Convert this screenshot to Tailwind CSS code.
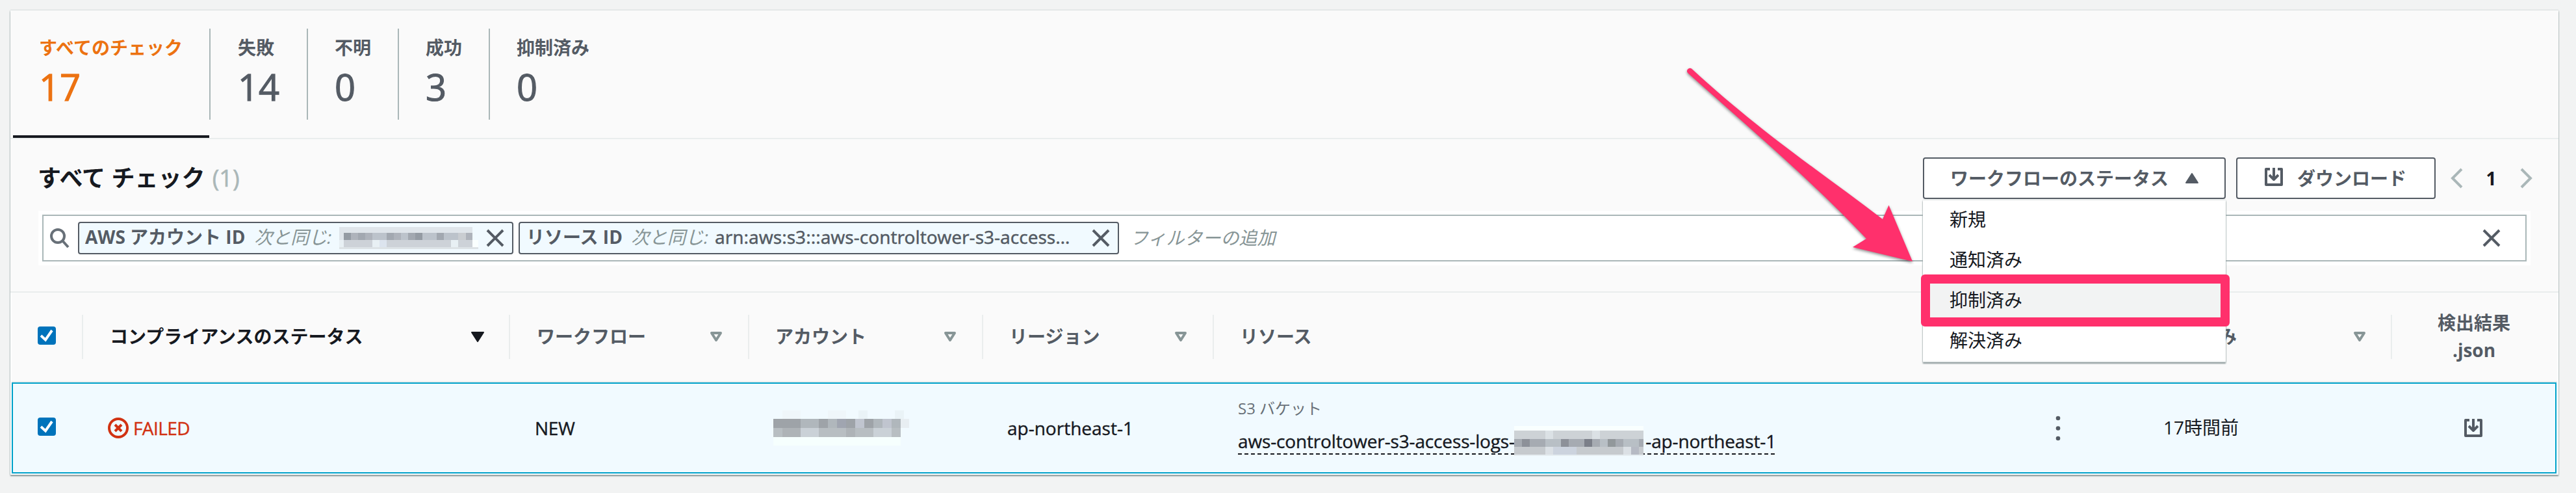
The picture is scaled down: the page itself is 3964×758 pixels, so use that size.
<!DOCTYPE html>
<html lang="ja">
<head>
<meta charset="utf-8">
<title>Security checks</title>
<script src="https://cdn.jsdelivr.net/npm/@tailwindcss/browser@4"></script>
</head>
<body class="w-[3964px] h-[758px] overflow-hidden bg-[#f2f3f3] pt-4 pl-4 text-[28px] leading-[44px] text-[#16191f] font-['Open_Sans','Noto_Sans_CJK_JP',sans-serif]">
<main class="relative w-[3921px] h-[714px] bg-white shadow-[0_2px_2px_0_#879596,0_0_2px_0_#aab7b8]">

  <nav class="flex h-[198px] bg-[#fafafa] border-b-2 border-[#eaeded] pl-1 text-[#545b64] whitespace-nowrap">
    <div class="w-[302px] h-[196px] border-b-4 border-[#16191f] flex pt-7">
      <div class="w-[302px] h-[140px] pl-10 pt-[7px] text-[#ec7211] shrink-0">
        <div class="font-bold">すべてのチェック</div><div class="text-[56px] leading-[76px] [-webkit-text-stroke:1.2px]">17</div>
      </div>
    </div>
    <div class="mt-7 w-[150px] h-[140px] border-l-2 border-[#aab7b8] pl-[42px] pt-[7px]"><div class="font-bold">失敗</div><div class="text-[56px] leading-[76px] [-webkit-text-stroke:1.2px]">14</div></div>
    <div class="mt-7 w-[140px] h-[140px] border-l-2 border-[#aab7b8] pl-[41px] pt-[7px]"><div class="font-bold">不明</div><div class="text-[56px] leading-[76px] [-webkit-text-stroke:1.2px]">0</div></div>
    <div class="mt-7 w-[140px] h-[140px] border-l-2 border-[#aab7b8] pl-[41px] pt-[7px]"><div class="font-bold">成功</div><div class="text-[56px] leading-[76px] [-webkit-text-stroke:1.2px]">3</div></div>
    <div class="mt-7 w-[200px] h-[140px] border-l-2 border-[#aab7b8] pl-[41px] pt-[7px]"><div class="font-bold">抑制済み</div><div class="text-[56px] leading-[76px] [-webkit-text-stroke:1.2px]">0</div></div>
  </nav>

  <section class="h-[236px] bg-[#fafafa] border-b-2 border-[#eaeded] pt-7 whitespace-nowrap">
    <div class="flex h-16 items-center pl-[42px]">
      <h1 class="text-[36px] font-bold w-[2901px]">すべて チェック <span class="ml-[2px] font-normal text-[#aab7b8] [-webkit-text-stroke:0.6px]">(1)</span></h1>
      <div class="relative w-[466px] h-16 shrink-0 border-2 border-[#545b64] rounded bg-white flex items-center pl-10 text-[#545b64] font-bold">
        ワークフローのステータス
        <svg class="ml-[26px]" width="20" height="16" viewBox="0 0 20 16"><path d="M10 1L19 15H1Z" fill="#545b64" stroke="#545b64" stroke-width="2" stroke-linejoin="round"/></svg>
        <ul class="absolute left-[-2px] top-[64px] z-10 w-[466px] h-[249px] bg-white font-normal text-[#16191f] leading-[58px] border-b-2 border-[#eaeded] shadow-[0_2px_2px_0_#879596,0_0_2px_0_#aab7b8]">
          <li class="h-[62px] pl-[41px]">新規</li>
          <li class="h-[62px] pl-[41px]">通知済み</li>
          <li class="h-[62px] pl-[41px] bg-[#f2f3f3]">抑制済み</li>
          <li class="h-[62px] pl-[41px]">解決済み</li>
        </ul>
      </div>
      <div class="ml-4 w-[307px] h-16 shrink-0 border-2 border-[#545b64] rounded bg-white flex items-center pl-[42px] text-[#545b64] font-bold">
        <svg class="mr-[22px] -mt-1" width="28" height="28" viewBox="0 0 28 28"><path d="M8 2H2V26H26V2H20M14 0V17M7 11L14 18L21 11" fill="none" stroke="#545b64" stroke-width="4" stroke-linejoin="round"/></svg>
        ダウンロード
      </div>
      <svg class="ml-[23px] shrink-0" width="19" height="32" viewBox="0 0 19 32" fill="none" stroke="#aab7b8" stroke-width="4"><path d="M17 2L3 16L17 30"/></svg>
      <span class="w-[87px] text-center font-bold">1</span>
      <svg class="shrink-0" width="20" height="32" viewBox="0 0 20 32" fill="none" stroke="#aab7b8" stroke-width="4"><path d="M3 2L17 16L3 30"/></svg>
    </div>
    <div class="mt-[18px] ml-[43px] w-[3835px] h-[84px] bg-white p-[6px]">
      <div class="w-[3823px] h-[72px] border-2 border-[#aab7b8] flex items-center text-[#545b64]">
        <svg class="ml-[10px]" width="30" height="32" viewBox="0 0 30 32" fill="none" stroke="#687078" stroke-width="4"><circle cx="12" cy="13" r="10"/><path d="M19 20L28 30"/></svg>
        <div class="ml-[13px] w-[670px] h-[50px] border-2 border-[#545b64] rounded bg-[#f1faff] flex items-center pl-[9px]">
          <div class="w-[391px] -mt-[4px]"><b>AWS アカウント ID</b><i class="ml-[14px] text-[#879596]">次と同じ:</i></div>
          <svg width="214" height="34" viewBox="0 0 214 34" shape-rendering="crispEdges">
            <path d="M0 0H205V34H0Z" fill="#dfe5ea"/><path d="M0 31H214V34H0Z" fill="#dde3e6"/><path d="M7 20H205V31H7Z" fill="#cdd2d8"/>
            <path d="M0 20H7V31H0ZM51 20H62V31H51ZM172 20H183V31H172Z" fill="#e8f0f4"/><path d="M205 20H214V31H205Z" fill="#fafffe"/><path d="M62 20H73V31H62Z" fill="#dce4ee"/>
            <path d="M7 9H18V20H7ZM117 9H128V20H117Z" fill="#949ba3"/><path d="M18 9H29V20H18ZM40 9H51V20H40ZM84 9H95V20H84ZM195 9H205V20H195Z" fill="#aeb3bb"/>
            <path d="M29 9H40V20H29ZM73 9H84V20H73ZM106 9H117V20H106ZM150 9H161V20H150Z" fill="#a2a8b0"/><path d="M51 9H73V20H51ZM95 9H106V20H95ZM128 9H150V20H128ZM161 9H183V20H161Z" fill="#bcc3cb"/><path d="M183 9H195V20H183Z" fill="#c9cdd1"/>
          </svg>
          <svg class="ml-auto mr-[12px]" width="28" height="28" viewBox="0 0 28 28" stroke="#545b64" stroke-width="4"><path d="M2 2L26 26M26 2L2 26"/></svg>
        </div>
        <div class="ml-2 w-[924px] h-[50px] border-2 border-[#545b64] rounded bg-[#f1faff] flex items-center pl-[10px]">
          <div class="w-[290px] -mt-[4px]"><b>リソース ID</b><i class="ml-[13px] text-[#879596]">次と同じ:</i></div><span class="-mt-[4px] font-['Noto_Sans','Noto_Sans_CJK_JP',sans-serif] [-webkit-text-stroke:0.4px]">arn:aws:s3:::aws-controltower-s3-access…</span>
          <svg class="ml-auto mr-[12px]" width="28" height="28" viewBox="0 0 28 28" stroke="#545b64" stroke-width="4"><path d="M2 2L26 26M26 2L2 26"/></svg>
        </div>
        <i class="ml-[17px] -mt-[2px] text-[#879596]">フィルターの追加</i>
        <svg class="ml-auto mr-[38px]" width="28" height="28" viewBox="0 0 28 28" stroke="#545b64" stroke-width="4"><path d="M2 2L26 26M26 2L2 26"/></svg>
      </div>
    </div>
  </section>

  <section class="flex h-[138px] bg-[#fafafa] border-b-2 border-[#eaeded] pt-[34px] font-bold text-[#545b64] leading-[68px] whitespace-nowrap mx-[2px]">
    <div class="w-[108px] h-[68px] pl-10 pt-[18px]"><svg width="28" height="28" viewBox="0 0 28 28"><rect width="28" height="28" rx="4" fill="#0073bb"/><path d="M5 14L12 20.500L22 6" fill="none" stroke="#fff" stroke-width="4"/></svg></div>
    <div class="w-[657px] h-[68px] border-l-2 border-[#eaeded] pl-[41px] flex items-center text-[#16191f]"><span class="-mt-[2px]">コンプライアンスのステータス</span>
      <svg class="ml-auto mr-[38px]" width="20" height="16" viewBox="0 0 20 16"><path d="M1 1H19L10 15Z" fill="#16191f" stroke="#16191f" stroke-width="2" stroke-linejoin="round"/></svg></div>
    <div class="w-[368px] h-[68px] border-l-2 border-[#eaeded] pl-[41px] flex items-center"><span class="-mt-[2px]">ワークフロー</span>
      <svg class="ml-auto mr-[39px]" width="20" height="16" viewBox="0 0 20 16"><path d="M3 2H17L10 13Z" fill="none" stroke="#879596" stroke-width="4" stroke-linejoin="round"/></svg></div>
    <div class="w-[360px] h-[68px] border-l-2 border-[#eaeded] pl-10 flex items-center"><span class="-mt-[2px]">アカウント</span>
      <svg class="ml-auto mr-[39px]" width="20" height="16" viewBox="0 0 20 16"><path d="M3 2H17L10 13Z" fill="none" stroke="#879596" stroke-width="4" stroke-linejoin="round"/></svg></div>
    <div class="w-[355px] h-[68px] border-l-2 border-[#eaeded] pl-10 flex items-center"><span class="-mt-[2px]">リージョン</span>
      <svg class="ml-auto mr-[39px]" width="20" height="16" viewBox="0 0 20 16"><path d="M3 2H17L10 13Z" fill="none" stroke="#879596" stroke-width="4" stroke-linejoin="round"/></svg></div>
    <div class="w-[1422px] h-[68px] border-l-2 border-[#eaeded] pl-10 flex items-center"><span class="-mt-[2px]">リソース</span></div>
    <div class="w-[391px] h-[68px] border-l-2 border-[#eaeded] pl-10 flex items-center"><span class="-mt-[2px]">更新済み</span>
      <svg class="ml-auto mr-[38px]" width="20" height="16" viewBox="0 0 20 16"><path d="M3 2H17L10 13Z" fill="none" stroke="#879596" stroke-width="4" stroke-linejoin="round"/></svg></div>
    <div class="w-[254px] h-[68px] border-l-2 border-[#eaeded] leading-[42px] text-center"><div class="-mt-[9px]">検出結果<br>.json</div></div>
  </section>

  <section class="mx-[2px] w-[3916px] h-[140px] bg-[#f1faff] border-2 border-[#00a1c9] flex items-center whitespace-nowrap">
    <div class="w-[107px] pl-[38px] -mt-1"><svg width="28" height="28" viewBox="0 0 28 28"><rect width="28" height="28" rx="4" fill="#0073bb"/><path d="M5 14L12 20.500L22 6" fill="none" stroke="#fff" stroke-width="4"/></svg></div>
    <div class="w-[656px] pl-[39px] flex items-center text-[#d13212]">
      <svg class="mr-[7px]" width="32" height="32" viewBox="0 0 32 32" fill="none" stroke="#d13212" stroke-width="4"><circle cx="16" cy="16" r="14"/><path d="M11 11L21 21M21 11L11 21"/></svg><span class="tracking-[-0.6px] [-webkit-text-stroke:0.4px]">FAILED</span></div>
    <div class="w-[368px] pl-[40px] tracking-[-0.3px] [-webkit-text-stroke:0.4px]">NEW</div>
    <div class="w-[360px] pl-[39px]">
      <svg width="212" height="54" viewBox="0 0 212 54" shape-rendering="crispEdges">
        <path d="M14 0H42V13H14ZM84 0H112V13H84Z" fill="#eff6fa"/><path d="M131 0H145V13H131ZM187 0H201V13H187Z" fill="#eaf3f7"/><path d="M0 41H196V54H0Z" fill="#f6fffe"/>
        <path d="M0 13H42V27H0ZM70 13H84V27H70ZM112 13H126V27H112ZM140 13H154V27H140Z" fill="#9ea3a8"/><path d="M42 13H70V27H42ZM84 13H98V27H84ZM154 13H168V27H154ZM182 13H196V27H182Z" fill="#b0b7bc"/><path d="M98 13H112V27H98Z" fill="#a0a5b0"/><path d="M126 13H140V27H126ZM168 13H182V27H168Z" fill="#c0c5cf"/><path d="M196 13H209V27H196Z" fill="#e8eef2"/>
        <path d="M0 27H196V41H0Z" fill="#b8bec2"/><path d="M42 27H70V41H42ZM154 27H182V41H154Z" fill="#cad1d7"/><path d="M14 27H42V41H14ZM112 27H126V41H112Z" fill="#aeb3b7"/>
      </svg>
    </div>
    <div class="w-[355px] pl-[39px] [-webkit-text-stroke:0.4px]">ap-northeast-1</div>
    <div class="w-[1231px] pl-[39px] -mt-[8px]">
      <div class="h-10 pt-[2px] text-[24px] leading-[40px] text-[#687078]">S3 バケット</div>
      <div class="relative mt-[9px] h-[48px] w-[828px] flex justify-between [-webkit-text-stroke:0.4px] tracking-[-0.15px]">
        <span class="leading-[46px]">aws-controltower-s3-access-logs-</span><span class="leading-[46px]">-ap-northeast-1</span>
        <div class="absolute left-0 bottom-[4px] h-[2px] w-[828px] bg-[repeating-linear-gradient(90deg,#16191f_0_6px,transparent_6px_10px)]"></div>
        <svg class="absolute left-[425px] top-0" width="199" height="46" viewBox="0 0 199 46" shape-rendering="crispEdges">
          <path d="M0 0H199V8H0Z" fill="#f9ffff"/><path d="M0 7H199V20H0Z" fill="#cdd2d6"/><path d="M48 7H60V20H48ZM120 7H132V20H120Z" fill="#dbe1e5"/>
          <path d="M0 20H199V32H0Z" fill="#a6abb2"/><path d="M12 20H24V32H12ZM72 20H84V32H72Z" fill="#8d9199"/><path d="M108 20H120V32H108Z" fill="#7b7f89"/><path d="M48 20H72V32H48ZM132 20H144V32H132ZM168 20H192V32H168Z" fill="#b8bfc5"/><path d="M144 20H156V32H144Z" fill="#92989b"/>
          <path d="M0 32H199V44H0Z" fill="#c6cace"/><path d="M48 32H60V44H48ZM168 32H180V44H168Z" fill="#dbe0e5"/><path d="M60 32H96V44H60Z" fill="#ccd3de"/><path d="M180 32H192V44H180Z" fill="#b6bac4"/><path d="M0 44H199V46H0Z" fill="#e6edf1"/>
        </svg>
      </div>
    </div>
    <div class="w-[191px] pl-[66px]"><svg width="8" height="40" viewBox="0 0 8 40" fill="#545b64"><circle cx="4" cy="5" r="3.300"/><circle cx="4" cy="20.500" r="3.300"/><circle cx="4" cy="36" r="3.300"/></svg></div>
    <div class="w-[392px] pl-[41px] -mt-[2px]">17時間前</div>
    <div class="pl-[112px]"><svg width="28" height="28" viewBox="0 0 28 28" fill="none" stroke="#545b64" stroke-width="4" stroke-linejoin="round"><path d="M8 2H2V26H26V2H20M14 0V17M7 11L14 18L21 11"/></svg></div>
  </section>

  <svg class="absolute left-[2564px] top-[74px] z-20 overflow-visible" width="380" height="330" viewBox="2580 90 380 330"><path d="M2603 105.500C2710 204 2800 263 2897 337L2906.500 315.500L2943 402L2851 380L2872 367C2790 280 2700 204 2597 112A4.500 4.500 0 0 1 2603 105.500Z" fill="#ff306c" class="drop-shadow-[0_2px_2px_rgba(0,0,0,0.45)]"/></svg>
  <div class="absolute left-[2940px] top-[406px] z-20 w-[475px] h-[80px] rounded-[6px] border-[14px] border-[#ff306c]"></div>
</main>
</body>
</html>
